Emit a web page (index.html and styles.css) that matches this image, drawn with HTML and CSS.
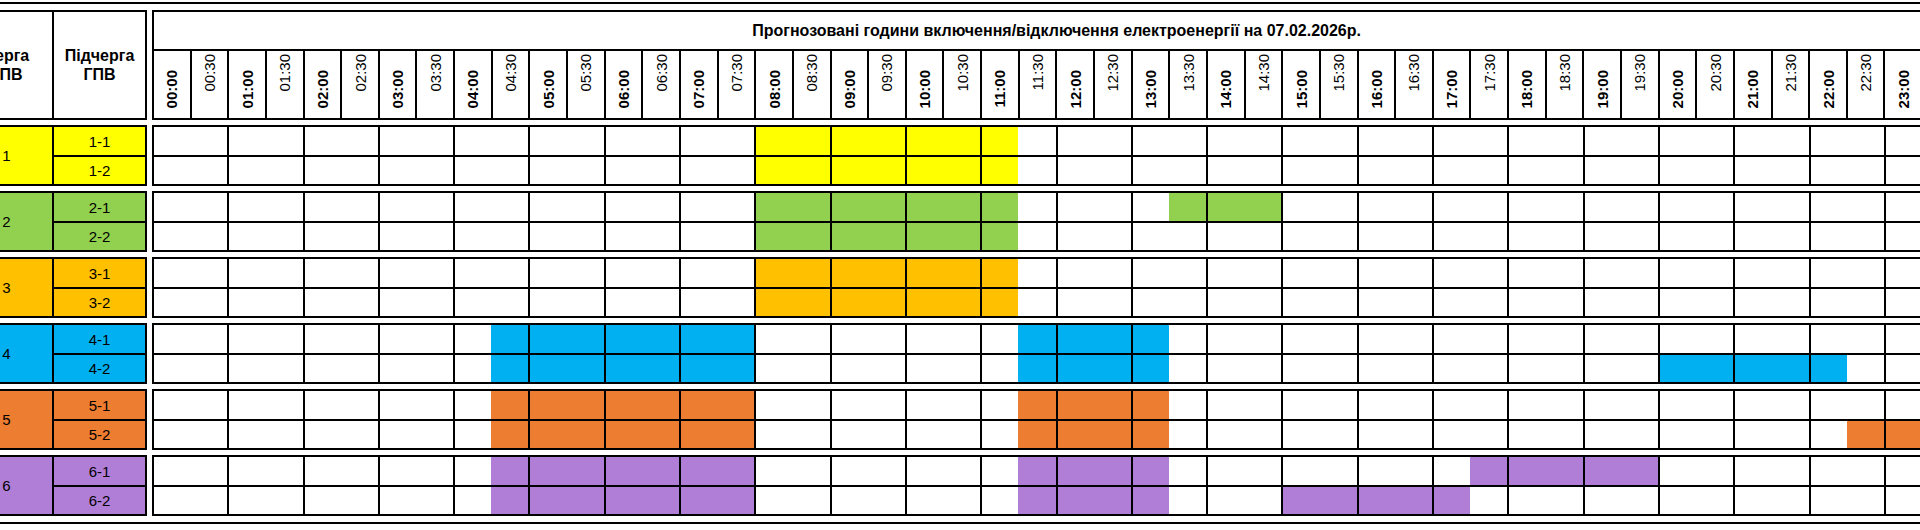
FILE: index.html
```html
<!DOCTYPE html>
<html lang="uk">
<head>
<meta charset="utf-8">
<title>Графік погодинних відключень</title>
<link rel="stylesheet" href="styles.css">
</head>
<body>
<div class="sheet">
  <div class="rule"></div>

  <div class="row">
    <div class="lhead">
      <div class="lh lh-first">Черга<br>ГПВ</div>
      <div class="lh">Підчерга<br>ГПВ</div>
    </div>
    <div class="rhead">
      <div class="title">Прогнозовані години включення/відключення електроенергії на 07.02.2026р.</div>
      <div class="times">
        <div class="t b"><span>00:00</span></div><div class="t"><span>00:30</span></div>
        <div class="t b"><span>01:00</span></div><div class="t"><span>01:30</span></div>
        <div class="t b"><span>02:00</span></div><div class="t"><span>02:30</span></div>
        <div class="t b"><span>03:00</span></div><div class="t"><span>03:30</span></div>
        <div class="t b"><span>04:00</span></div><div class="t"><span>04:30</span></div>
        <div class="t b"><span>05:00</span></div><div class="t"><span>05:30</span></div>
        <div class="t b"><span>06:00</span></div><div class="t"><span>06:30</span></div>
        <div class="t b"><span>07:00</span></div><div class="t"><span>07:30</span></div>
        <div class="t b"><span>08:00</span></div><div class="t"><span>08:30</span></div>
        <div class="t b"><span>09:00</span></div><div class="t"><span>09:30</span></div>
        <div class="t b"><span>10:00</span></div><div class="t"><span>10:30</span></div>
        <div class="t b"><span>11:00</span></div><div class="t"><span>11:30</span></div>
        <div class="t b"><span>12:00</span></div><div class="t"><span>12:30</span></div>
        <div class="t b"><span>13:00</span></div><div class="t"><span>13:30</span></div>
        <div class="t b"><span>14:00</span></div><div class="t"><span>14:30</span></div>
        <div class="t b"><span>15:00</span></div><div class="t"><span>15:30</span></div>
        <div class="t b"><span>16:00</span></div><div class="t"><span>16:30</span></div>
        <div class="t b"><span>17:00</span></div><div class="t"><span>17:30</span></div>
        <div class="t b"><span>18:00</span></div><div class="t"><span>18:30</span></div>
        <div class="t b"><span>19:00</span></div><div class="t"><span>19:30</span></div>
        <div class="t b"><span>20:00</span></div><div class="t"><span>20:30</span></div>
        <div class="t b"><span>21:00</span></div><div class="t"><span>21:30</span></div>
        <div class="t b"><span>22:00</span></div><div class="t"><span>22:30</span></div>
        <div class="t b"><span>23:00</span></div><div class="t"><span>23:30</span></div>
      </div>
    </div>
  </div>

  <!-- Group 1 -->
  <div class="row g1">
    <div class="gl"><div class="num">1</div><div class="sub">1-1</div><div class="sub">1-2</div></div>
    <div class="gr">
      <div class="hrs"><i></i><i></i><i></i><i></i><i></i><i></i><i></i><i></i><i class="f"></i><i class="f"></i><i class="f"></i><i class="l"></i><i></i><i></i><i></i><i></i><i></i><i></i><i></i><i></i><i></i><i></i><i></i><i></i></div>
      <div class="hrs"><i></i><i></i><i></i><i></i><i></i><i></i><i></i><i></i><i class="f"></i><i class="f"></i><i class="f"></i><i class="l"></i><i></i><i></i><i></i><i></i><i></i><i></i><i></i><i></i><i></i><i></i><i></i><i></i></div>
    </div>
  </div>

  <!-- Group 2 -->
  <div class="row g2">
    <div class="gl"><div class="num">2</div><div class="sub">2-1</div><div class="sub">2-2</div></div>
    <div class="gr">
      <div class="hrs"><i></i><i></i><i></i><i></i><i></i><i></i><i></i><i></i><i class="f"></i><i class="f"></i><i class="f"></i><i class="l"></i><i></i><i class="r"></i><i class="f"></i><i></i><i></i><i></i><i></i><i></i><i></i><i></i><i></i><i></i></div>
      <div class="hrs"><i></i><i></i><i></i><i></i><i></i><i></i><i></i><i></i><i class="f"></i><i class="f"></i><i class="f"></i><i class="l"></i><i></i><i></i><i></i><i></i><i></i><i></i><i></i><i></i><i></i><i></i><i></i><i></i></div>
    </div>
  </div>

  <!-- Group 3 -->
  <div class="row g3">
    <div class="gl"><div class="num">3</div><div class="sub">3-1</div><div class="sub">3-2</div></div>
    <div class="gr">
      <div class="hrs"><i></i><i></i><i></i><i></i><i></i><i></i><i></i><i></i><i class="f"></i><i class="f"></i><i class="f"></i><i class="l"></i><i></i><i></i><i></i><i></i><i></i><i></i><i></i><i></i><i></i><i></i><i></i><i></i></div>
      <div class="hrs"><i></i><i></i><i></i><i></i><i></i><i></i><i></i><i></i><i class="f"></i><i class="f"></i><i class="f"></i><i class="l"></i><i></i><i></i><i></i><i></i><i></i><i></i><i></i><i></i><i></i><i></i><i></i><i></i></div>
    </div>
  </div>

  <!-- Group 4 -->
  <div class="row g4">
    <div class="gl"><div class="num">4</div><div class="sub">4-1</div><div class="sub">4-2</div></div>
    <div class="gr">
      <div class="hrs"><i></i><i></i><i></i><i></i><i class="r"></i><i class="f"></i><i class="f"></i><i class="f"></i><i></i><i></i><i></i><i class="r"></i><i class="f"></i><i class="l"></i><i></i><i></i><i></i><i></i><i></i><i></i><i></i><i></i><i></i><i></i></div>
      <div class="hrs"><i></i><i></i><i></i><i></i><i class="r"></i><i class="f"></i><i class="f"></i><i class="f"></i><i></i><i></i><i></i><i class="r"></i><i class="f"></i><i class="l"></i><i></i><i></i><i></i><i></i><i></i><i></i><i class="f"></i><i class="f"></i><i class="l"></i><i></i></div>
    </div>
  </div>

  <!-- Group 5 -->
  <div class="row g5">
    <div class="gl"><div class="num">5</div><div class="sub">5-1</div><div class="sub">5-2</div></div>
    <div class="gr">
      <div class="hrs"><i></i><i></i><i></i><i></i><i class="r"></i><i class="f"></i><i class="f"></i><i class="f"></i><i></i><i></i><i></i><i class="r"></i><i class="f"></i><i class="l"></i><i></i><i></i><i></i><i></i><i></i><i></i><i></i><i></i><i></i><i></i></div>
      <div class="hrs"><i></i><i></i><i></i><i></i><i class="r"></i><i class="f"></i><i class="f"></i><i class="f"></i><i></i><i></i><i></i><i class="r"></i><i class="f"></i><i class="l"></i><i></i><i></i><i></i><i></i><i></i><i></i><i></i><i></i><i class="r"></i><i class="f"></i></div>
    </div>
  </div>

  <!-- Group 6 -->
  <div class="row g6">
    <div class="gl"><div class="num">6</div><div class="sub">6-1</div><div class="sub">6-2</div></div>
    <div class="gr">
      <div class="hrs"><i></i><i></i><i></i><i></i><i class="r"></i><i class="f"></i><i class="f"></i><i class="f"></i><i></i><i></i><i></i><i class="r"></i><i class="f"></i><i class="l"></i><i></i><i></i><i></i><i class="r"></i><i class="f"></i><i class="f"></i><i></i><i></i><i></i><i></i></div>
      <div class="hrs"><i></i><i></i><i></i><i></i><i class="r"></i><i class="f"></i><i class="f"></i><i class="f"></i><i></i><i></i><i></i><i class="r"></i><i class="f"></i><i class="l"></i><i></i><i class="f"></i><i class="f"></i><i class="l"></i><i></i><i></i><i></i><i></i><i></i><i></i></div>
    </div>
  </div>

  <div class="rule rule-bottom"></div>
</div>
</body>
</html>
```
FILE: styles.css
```css
* {
  box-sizing: border-box;
  margin: 0;
  padding: 0;
}

html, body {
  background: #fff;
  overflow: hidden;
}

body {
  width: 1920px;
  height: 530px;
  font-family: "Liberation Sans", Arial, sans-serif;
  color: #000;
}

.sheet {
  width: max-content;
  margin-left: -41px;
  padding-top: 2px;
  display: flex;
  flex-direction: column;
  gap: 5px;
}

.rule {
  height: 2px;
  background: #000;
  margin-bottom: 1px;
}

.rule-bottom {
  margin-top: 1px;
  margin-bottom: 0;
}

.row {
  display: flex;
  gap: 5px;
}

/* ---------- left header ---------- */
.lhead {
  width: 188px;
  height: 110px;
  border: 2px solid #000;
  display: grid;
  grid-template-columns: 93px 91px;
}

.lh {
  display: flex;
  align-items: center;
  justify-content: center;
  text-align: center;
  font-weight: bold;
  font-size: 16px;
  line-height: 19px;
}

.lh-first {
  border-right: 2px solid #000;
}

/* ---------- right header ---------- */
.rhead {
  width: 1809.2px;
  height: 110px;
  border: 2px solid #000;
  border-left: 0;
  display: flex;
  flex-direction: column;
}

.title {
  height: 39px;
  border-left: 2px solid #000;
  border-bottom: 2px solid #000;
  display: flex;
  align-items: center;
  justify-content: center;
  font-weight: bold;
  font-size: 16px;
}

.times {
  flex: 1;
  display: grid;
  grid-template-columns: repeat(48, 37.65px);
}

.t {
  border-left: 2px solid #000;
  display: flex;
  justify-content: center;
  align-items: flex-start;
  padding-top: 3px;
  font-size: 15px;
}

.t span {
  writing-mode: vertical-rl;
  transform: rotate(180deg);
  line-height: 1;
}

.t.b {
  font-weight: bold;
  align-items: flex-end;
  padding-top: 0;
  padding-bottom: 10px;
}

/* ---------- groups ---------- */
.g1 { --c: #ffff00; }
.g2 { --c: #92d050; }
.g3 { --c: #ffc000; }
.g4 { --c: #00b0f0; }
.g5 { --c: #ed7d31; }
.g6 { --c: #b07dd7; }

.gl {
  width: 188px;
  height: 61px;
  border: 2px solid #000;
  background: var(--c);
  display: grid;
  grid-template-columns: 93px 91px;
  grid-template-rows: 28px 29px;
  font-size: 15px;
}

.num {
  grid-row: 1 / 3;
  border-right: 2px solid #000;
  display: flex;
  align-items: center;
  justify-content: center;
}

.sub {
  display: flex;
  align-items: center;
  justify-content: center;
}

.sub + .sub {
  border-top: 2px solid #000;
}

.gr {
  width: 1809.2px;
  height: 61px;
  border: 2px solid #000;
  border-left: 0;
  display: grid;
  grid-template-rows: 28px 29px;
}

.hrs {
  display: grid;
  grid-template-columns: repeat(24, 75.3px);
}

.hrs + .hrs {
  border-top: 2px solid #000;
}

.hrs i {
  display: block;
  border-left: 2px solid #000;
}

.hrs i.f {
  background: var(--c);
}

.hrs i.l {
  background: linear-gradient(90deg, var(--c) 35.65px, transparent 35.65px);
}

.hrs i.r {
  background: linear-gradient(90deg, transparent 35.65px, var(--c) 35.65px);
}
```
